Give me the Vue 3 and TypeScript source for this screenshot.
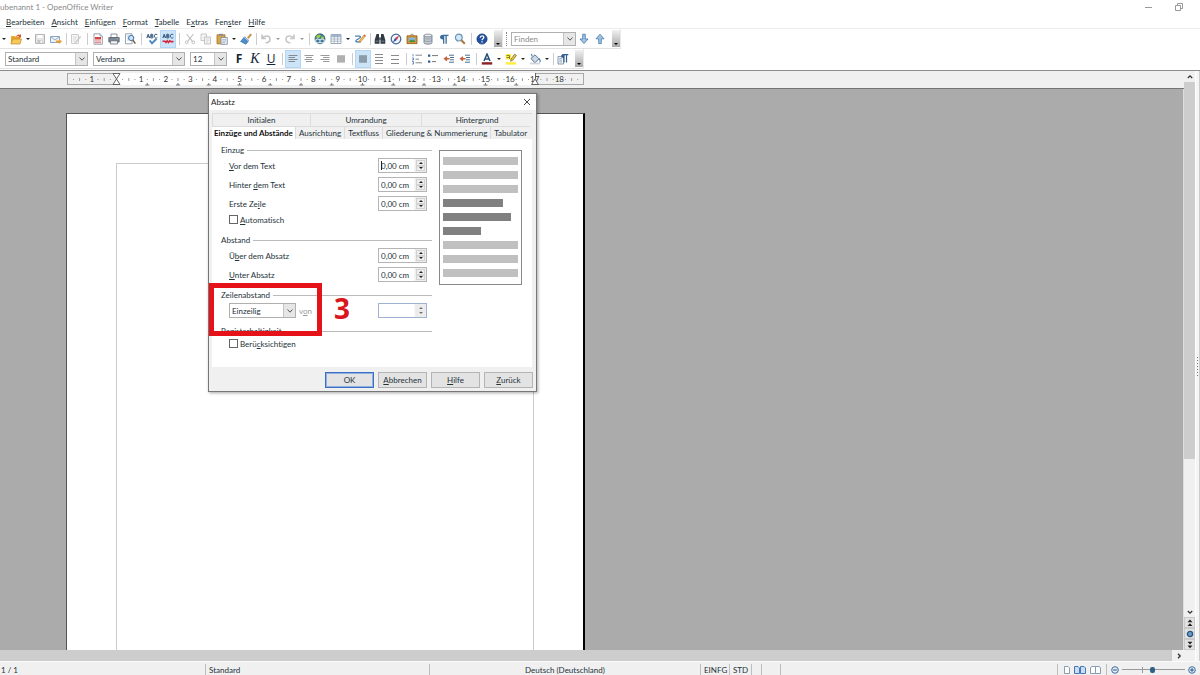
<script setup lang="ts">
import { h, ref } from 'vue'

type Shape = [d: string, fill: string, stroke?: string, width?: number]
interface Tool { kind: 'icon' | 'caret' | 'sep' | 'thin'; icon?: string; label?: string; active?: boolean; dim?: boolean }

/* Splits "Hinter _dem" around its access key and underlines the key. */
const Mnemonic = (props: { text: string }) => {
  const i = props.text.indexOf('_')
  if (i < 0) return h('span', props.text)
  return h('span', [props.text.slice(0, i), h('u', props.text[i + 1]), props.text.slice(i + 2)])
}

const icons: Record<string, Shape[]> = {
  open: [['M1 3H5L6 4H10V10H1Z', '#e9a92c'], ['M1 10L3 6H11.5L10 11H1Z', '#f7c95a', '#b97a14', 0.6], ['M6 4C7 1 9 1 10 2L11 1V4.5H7.5L9 3.4C8 2.6 7.5 3 6.8 4Z', '#d5532b']],
  save: [['M1.5 1.5H10.5V10.5H1.5Z', '#e4e4e4', '#b4b4b4', 1], ['M3.5 2H8.5V5H3.5Z', '#fff'], ['M3.5 7H8.5V10.5H3.5Z', '#c4c4c4'], ['M6.5 7.5H7.8V10H6.5Z', '#fff']],
  mail: [['M.5 3.5H9.5V9.5H.5Z', '#edf2f8', '#7f9cba', 0.9], ['M1 4L5 7L9 4', 'none', '#7f9cba', 0.8], ['M6 7.5H9V6L12 8.5L9 11V9.5H6Z', '#e9a02c']],
  edit: [['M1.5 1.5H8.5V10.5H1.5Z', '#f6f6f6', '#c8c8c8', 0.9], ['M3 4H7M3 6H6M3 8H5', 'none', '#d0d0d0', 0.8], ['M5 9L10 3L11.2 4L6.2 9.7L4.6 10Z', '#c9c9c9']],
  pdf: [['M2 .8H8L10.3 3V11.2H2Z', '#fff', '#8a93a0', 0.9], ['M8 .8V3H10.3', '#dde4ec', '#8a93a0', 0.7], ['M3 4H9V6.5H3Z', '#d84343'], ['M3 8H9M3 9.7H9', 'none', '#d86a6a', 0.9]],
  print: [['M3 1H9V5H3Z', '#fff', '#6f7883', 0.8], ['M.8 4.5H11.2V9H.8Z', '#7b8794', '#4d5863', 0.7], ['M2.5 7.8H9.5V11H2.5Z', '#f2f5f8', '#59636e', 0.7], ['M8.8 5.5H10V6.3H8.8Z', '#8de08a']],
  preview: [['M1.5 .8H8V10.8H1.5Z', '#fff', '#7b8fa6', 0.8], ['M3 3H6.6M3 5H5M3 7H5', 'none', '#a7b7c8', 0.7], ['M4.6 5A2.6 2.6 0 1 0 9.8 5A2.6 2.6 0 1 0 4.6 5', '#cfe5f8', '#3c6fa3', 1], ['M9 7.2L11.3 10.6', 'none', '#7d5b3a', 1.5]],
  spell: [['M.8 5L2.2 1.2L3.6 5M1.3 3.8H3.1M4.8 1.2V5H6C7.6 5 7.6 3 6 3H4.8H6C7.3 3 7.3 1.2 6 1.2H4.8M11.3 1.7C9.4.3 8.3 1.8 8.4 3.2C8.5 5 10.3 5.6 11.4 4.4', 'none', '#24466f', 0.9], ['M3.6 7.4L6 10.3L10.6 5.8', 'none', '#4b8bc4', 1.9]],
  auto: [['M.8 5L2.2 1.2L3.6 5M1.3 3.8H3.1M4.8 1.2V5H6C7.6 5 7.6 3 6 3H4.8H6C7.3 3 7.3 1.2 6 1.2H4.8M11.3 1.7C9.4.3 8.3 1.8 8.4 3.2C8.5 5 10.3 5.6 11.4 4.4', 'none', '#24466f', 0.9], ['M.5 8.2H3L4 9.4L5.2 7.8L6.5 9.4L7.8 7.8L9 8.6H11.5', 'none', '#d3273c', 1.6]],
  cut: [['M2.5 1L8.6 8.6M9.5 1L3.4 8.6', 'none', '#c0c0c0', 1.1], ['M1.3 9.3A1.4 1.4 0 1 0 4.1 9.3A1.4 1.4 0 1 0 1.3 9.3M7.9 9.3A1.4 1.4 0 1 0 10.7 9.3A1.4 1.4 0 1 0 7.9 9.3', 'none', '#c0c0c0', 1]],
  copy: [['M1 1H6.5V7.5H1Z', '#f4f4f4', '#c3c3c3', 0.9], ['M4.5 4H10.5V11H4.5Z', '#f4f4f4', '#bdbdbd', 0.9], ['M6 6H9M6 7.6H9M6 9.2H8', 'none', '#cfcfcf', 0.7]],
  paste: [['M1 1.8H9V10.8H1Z', '#dca648', '#9d6f20', 0.8], ['M3 .8H7V3H3Z', '#8b8f95'], ['M5 4.5H11.3V11.3H5Z', '#eef3f8', '#7688a0', 0.8], ['M6.2 6.6H10M6.2 8.1H10M6.2 9.6H9', 'none', '#8fa3b9', 0.7]],
  brush: [['M7.5 4.5L10.5 .8L11.6 1.8L8.6 5.5Z', '#d59b3b', '#99651b', 0.4], ['M4.7 3.6L9 7.6L7.9 8.7L3.6 4.9Z', '#a9c4de', '#5c7898', 0.5], ['M3.5 5L7.8 8.8L5.8 11.2L.6 8.4Z', '#4a8fd0', '#2b5f98', 0.6]],
  undo: [['M2 1.5V5.5H6M2.3 5.2C4 2.4 9.8 2 10 6C10 8.5 7.8 9.8 5.5 9.8', 'none', '#c3c3c3', 1.6]],
  redo: [['M10 1.5V5.5H6M9.7 5.2C8 2.4 2.2 2 2 6C2 8.5 4.2 9.8 6.5 9.8', 'none', '#c8c8c8', 1.6]],
  globe: [['M1 5.8A5 5 0 1 0 11 5.8A5 5 0 1 0 1 5.8', '#3f7d9c', '#2b5567', 0.7], ['M2 3.5L4.5 1.6L7 2.2L5.4 4.7L3 5.2ZM7.5 3L10.2 4.6L9 6.6L7 5.4Z', '#9ecb4a'], ['M1.8 8A2.2 1.5 0 1 1 6 8A2.2 1.5 0 1 1 1.8 8M6 8A2.2 1.5 0 1 1 10.2 8A2.2 1.5 0 1 1 6 8', 'none', '#d9e5ec', 1.1]],
  table: [['M1 1.5H11V10.5H1Z', '#fff', '#8194a8', 0.8], ['M1 1.5H11V3.6H1Z', '#9fb9d4'], ['M1 3.8H11M1 6H11M1 8.2H11M4.3 1.5V10.5M7.6 1.5V10.5', 'none', '#8ea2b6', 0.7]],
  draw: [['M1 3.2H5.5C7 3.2 6.5 5 5 5.5L2.5 7C1 8.5 2.5 9.2 4.5 8.9H7', 'none', '#4a80bd', 1.3], ['M5.4 7.6L9.8 2.2L11.3 3.3L7 8.6L5 9.4Z', '#f2b84b', '#b77b20', 0.5], ['M9.6 2.5L10.4 1.4L11.9 2.6L11.1 3.6Z', '#d85050']],
  find: [['M2.5 1H5V4L5.5 5V10.8H.7V7Z', '#333a44'], ['M9.5 1H7V4L6.5 5V10.8H11.3V7Z', '#333a44'], ['M5 4.4H7V7H5Z', '#59626e'], ['M1.6 8.2H4.4M7.6 8.2H10.4', 'none', '#8391a2', 0.9]],
  compass: [['M1.2 6A4.8 4.8 0 1 0 10.8 6A4.8 4.8 0 1 0 1.2 6', '#f0f5fc', '#4d689c', 1.3], ['M9.2 2.4L6.9 7L5 5Z', '#d53b3b'], ['M2.8 9.4L5 5L6.9 7Z', '#2d519b']],
  gallery: [['M1 2.8H11V10.6H1Z', '#d69432', '#8d5b17', 0.8], ['M2.8 4.5H9.2V8.9H2.8Z', '#7fb8e3'], ['M2.8 8.9L5 6.4L6.5 7.6L8 6.6L9.2 8.9Z', '#4d8b3b'], ['M4 2.6L6 .9L8 2.6', 'none', '#8d5b17', 0.7]],
  db: [['M2 2.5V9.8C2 11.6 10 11.6 10 9.8V2.5Z', '#c5ccd4', '#6b7785', 0.8], ['M2 2.5C2 .7 10 .7 10 2.5C10 4.3 2 4.3 2 2.5Z', '#eef1f4', '#6b7785', 0.8], ['M2 5C3 6.4 9 6.4 10 5M2 7.4C3 8.8 9 8.8 10 7.4', 'none', '#7f8b98', 0.7]],
  pilcrow: [['M10.5 1.8H5C1 1.8 1 6.6 5 6.6V10.8H6.3V3H7.5V10.8H8.8V3H10.5Z', '#3a6d9e']],
  zoom: [['M1.4 4.6A3.4 3.4 0 1 0 8.2 4.6A3.4 3.4 0 1 0 1.4 4.6', '#d3e8f8', '#6b93b8', 1.2], ['M7.4 7.2L10.8 10.8', 'none', '#a9783f', 2]],
  help: [['M.9 6A5.1 5.1 0 1 0 11.1 6A5.1 5.1 0 1 0 .9 6', '#214f9e', '#153872', 0.7], ['M4.2 4.7C4.2 2.2 8 2.3 7.8 4.5C7.7 5.8 6 5.8 6 7.2M6 8.2V9.4', 'none', '#fff', 1.3]],
  down: [['M4.7 1.2H7.3V6H10L6 10.6L2 6H4.7Z', '#9fc3e4', '#4677a6', 0.8]],
  up: [['M4.7 10.6H7.3V5.8H10L6 1.2L2 5.8H4.7Z', '#9fc3e4', '#4677a6', 0.8]],
  left: [['M1.5 2.5H10.5M1.5 4.5H8M1.5 6.5H10.5M1.5 8.5H8', 'none', '#858b91', 1]],
  center: [['M1.5 2.5H10.5M3 4.5H9M1.5 6.5H10.5M3 8.5H9', 'none', '#9a9a9a', 1]],
  right: [['M1.5 2.5H10.5M4 4.5H10.5M1.5 6.5H10.5M4 8.5H10.5', 'none', '#9a9a9a', 1]],
  justify: [['M2 2.5H10V9H2Z', '#c4c4c4'], ['M2 3H10M2 5H10M2 7H10M2 9H10', 'none', '#9c9c9c', 1]],
  single: [['M2 2.5H10V9.5H2Z', '#9caab8'], ['M2 3H10M2 5H10M2 7H10M2 9H10', 'none', '#7f8d9b', 1]],
  onehalf: [['M2 1.5H10M2 4.5H10M2 7.5H10M2 10.5H10', 'none', '#8a8a8a', 1]],
  double: [['M2 2.5H10M2 6.5H10M2 10.5H10', 'none', '#8a8a8a', 1]],
  numbers: [['M2 1V3.5M1 5H2.5V7H1M1 8.5H2.5V11H1', 'none', '#4676a8', 0.8], ['M4.5 2.2H11M4.5 6.2H8M4.5 9.8H11', 'none', '#888', 1]],
  bullets: [['M1 1.5H3.3V3.8H1ZM1 7.5H3.3V9.8H1Z', '#345f8f'], ['M5 2.6H11M5 8.6H9', 'none', '#777', 1]],
  outdent: [['M6 2.2H11M7 4.5H11M7 6.8H11M6 9.2H11', 'none', '#4e7296', 1], ['M6.5 5.7H2.5M4 3.8L1.6 5.7L4 7.6', 'none', '#c4603c', 1.4]],
  indent: [['M6 2.2H11M7 4.5H11M7 6.8H11M6 9.2H11', 'none', '#4e7296', 1], ['M6.5 5.7H2.5M4 3.8L1.6 5.7L4 7.6', 'none', '#c4603c', 1.4]],
  color: [['M3 8L6 1L9 8M4.1 6H7.9', 'none', '#264f7d', 1.5], ['M.8 9.2H11.2V11.6H.8Z', '#8c1f24']],
  marker: [['M.8 9.2H11.2V11.6H.8Z', '#ffee3b'], ['M.8 1H6V6.5H.8Z', '#ffee3b'], ['M1.5 2.5H4.5V6M1.5 4.5H4.5', 'none', '#8a7424', 0.9], ['M6 6.2L9.6 1.2L11.4 2.4L7.8 7.2L5.6 8.2Z', '#eecb3a', '#6d5a22', 0.7]],
  bucket: [['M2 5.5L6 1.8L10 5.8L5.8 9.8Z', '#cfd9e3', '#496785', 0.9], ['M3.2 3.4L2.4 1M9.8 5.5C11.4 7 11.6 8.5 10.6 9.4', 'none', '#3f78b3', 1.1], ['M1 9.6H11V11.4H1Z', '#cfd5db']],
  para: [['M1 3.5H6.5V11H1Z', '#eef3f8', '#71869e', 0.8], ['M2.2 5.5H5M2.2 7.2H5M2.2 8.9H5', 'none', '#8397ab', 0.7], ['M11.3 1H6.4C3.4 1 3.4 5 6.4 5V9.5H7.6V2.2H8.9V9.5H10.1V2.2H11.3Z', '#315f8e']],
}

const t = (icon: string, label: string, extra: Partial<Tool> = {}): Tool => ({ kind: 'icon', icon, label, ...extra })
const caret: Tool = { kind: 'caret' }
const sep: Tool = { kind: 'sep' }
const thin: Tool = { kind: 'thin' }
const dimCaret: Tool = { kind: 'caret', dim: true }

const standardBar: Tool[] = [
  caret, t('open', 'Öffnen'), caret, t('save', 'Speichern'), t('mail', 'E-Mail'), thin, t('edit', 'Bearbeiten'), sep,
  t('pdf', 'PDF'), t('print', 'Drucken'), t('preview', 'Seitenansicht'), sep, t('spell', 'Rechtschreibung'),
  t('auto', 'AutoRechtschreibprüfung', { active: true }), sep, t('cut', 'Ausschneiden'), t('copy', 'Kopieren'),
  t('paste', 'Einfügen'), caret, t('brush', 'Format übertragen'), thin, t('undo', 'Rückgängig'), dimCaret,
  t('redo', 'Wiederherstellen'), dimCaret, sep, t('globe', 'Hyperlink'), t('table', 'Tabelle'), caret,
  t('draw', 'Zeichnen'), thin, t('find', 'Suchen'), t('compass', 'Navigator'), t('gallery', 'Gallery'),
  t('db', 'Datenquellen'), t('pilcrow', 'Steuerzeichen'), t('zoom', 'Maßstab'), sep, t('help', 'Hilfe'),
]
const formatBar: Tool[] = [
  sep, t('left', 'Linksbündig', { active: true }), t('center', 'Zentriert'), t('right', 'Rechtsbündig'), t('justify', 'Blocksatz'), sep,
  t('single', 'Zeilenabstand 1', { active: true }), t('onehalf', 'Zeilenabstand 1,5'), t('double', 'Zeilenabstand 2'), sep,
  t('numbers', 'Nummerierung'), t('bullets', 'Aufzählung'), t('outdent', 'Einzug verkleinern'), t('indent', 'Einzug vergrößern'), sep,
  t('color', 'Zeichenfarbe'), caret, t('marker', 'Hervorheben'), caret, t('bucket', 'Hintergrund'), caret, thin, t('para', 'Absatz'),
]

const menus = ['_Bearbeiten', '_Ansicht', '_Einfügen', '_Format', '_Tabelle', 'E_xtras', 'Fen_ster', '_Hilfe']
const topTabs = ['Initialen', 'Umrandung', 'Hintergrund']
const tabs = ['Einzüge und Abstände', 'Ausrichtung', 'Textfluss', 'Gliederung & Nummerierung', 'Tabulator']
const indents = [
  { id: 'before', label: '_Vor dem Text', focus: true },
  { id: 'after', label: 'Hinter _dem Text', focus: false },
  { id: 'first', label: 'Erste Ze_ile', focus: false },
]
const spacings = [
  { id: 'above', label: 'Ü_ber dem Absatz' },
  { id: 'below', label: '_Unter Absatz' },
]
const values = ref<Record<string, string>>({ before: '0,00 cm', after: '0,00 cm', first: '0,00 cm', above: '0,00 cm', below: '0,00 cm' })
const automatic = ref(false)
const register = ref(false)
const dialogButtons = ['_Abbrechen', '_Hilfe', '_Zurück']

/* Ruler geometry: one centimetre and the x of its zero mark. */
const cm = 24.6
const zero = 49.5
const numbers = [-1, ...Array.from({ length: 18 }, (_, i) => i + 1)]
const ticks = Array.from({ length: 83 }, (_, i) => i - 7).filter((i) => i % 4 !== 0)
const tabStops = Array.from({ length: 13 }, (_, i) => zero + (i + 1) * cm * 1.25)
</script>

<template>
  <div class="app">
    <header class="titlebar">
      <span class="title">ubenannt 1 - OpenOffice Writer</span>
      <div class="window-buttons">
        <button type="button" aria-label="Minimieren"><svg viewBox="0 0 8 8"><path d="M0 4.5H7" /></svg></button>
        <button type="button" aria-label="Verkleinern"><svg viewBox="0 0 8 8"><path d="M.5 2.5H5.5V7.5H.5ZM2.5 2.5V.5H7.5V5.5H5.5" /></svg></button>
      </div>
    </header>
    <nav class="menubar">
      <button v-for="m in menus" :key="m" type="button"><Mnemonic :text="m" /></button>
    </nav>

    <div class="toolbar">
      <div class="bar standard">
        <template v-for="(tool, i) in standardBar" :key="i">
          <button v-if="tool.kind === 'icon'" type="button" class="tool" :class="{ active: tool.active }" :aria-label="tool.label">
            <svg viewBox="0 0 12 12"><path v-for="(s, j) in icons[tool.icon!]" :key="j" :d="s[0]" :fill="s[1]" :stroke="s[2] ?? 'none'" :stroke-width="s[3] ?? 0" /></svg>
          </button>
          <span v-else :class="[tool.kind, { dim: tool.dim }]"></span>
        </template>
        <button type="button" class="overflow" aria-label="Weitere Symbole"></button>
      </div>
      <div class="bar search">
        <span class="grip"></span>
        <div class="combo find">
          <input type="text" placeholder="Finden" aria-label="Finden" />
          <span class="arrow"><svg viewBox="0 0 8 8"><path d="M1.5 2.5L4 5.2L6.5 2.5" /></svg></span>
        </div>
        <button v-for="d in ['down', 'up']" :key="d" type="button" class="tool" :aria-label="d === 'down' ? 'Weitersuchen' : 'Rückwärts suchen'">
          <svg viewBox="0 0 12 12"><path v-for="(s, j) in icons[d]" :key="j" :d="s[0]" :fill="s[1]" :stroke="s[2]" :stroke-width="s[3]" /></svg>
        </button>
        <button type="button" class="overflow" aria-label="Weitere Suchsymbole"></button>
      </div>
    </div>

    <div class="toolbar">
      <div class="bar format">
        <div class="combo style-box"><select aria-label="Vorlage"><option>Standard</option></select><span class="arrow"><svg viewBox="0 0 8 8"><path d="M1.5 2.5L4 5.2L6.5 2.5" /></svg></span></div>
        <div class="combo font-box"><select aria-label="Schriftart"><option>Verdana</option></select><span class="arrow"><svg viewBox="0 0 8 8"><path d="M1.5 2.5L4 5.2L6.5 2.5" /></svg></span></div>
        <div class="combo size-box"><select aria-label="Schriftgröße"><option>12</option></select><span class="arrow"><svg viewBox="0 0 8 8"><path d="M1.5 2.5L4 5.2L6.5 2.5" /></svg></span></div>
        <button type="button" class="tool letter bold">F</button>
        <button type="button" class="tool letter italic">K</button>
        <button type="button" class="tool letter under">U</button>
        <template v-for="(tool, i) in formatBar" :key="i">
          <button v-if="tool.kind === 'icon'" type="button" class="tool" :class="{ active: tool.active }" :aria-label="tool.label">
            <svg viewBox="0 0 12 12"><path v-for="(s, j) in icons[tool.icon!]" :key="j" :d="s[0]" :fill="s[1]" :stroke="s[2] ?? 'none'" :stroke-width="s[3] ?? 0" /></svg>
          </button>
          <span v-else :class="tool.kind"></span>
        </template>
        <button type="button" class="overflow" aria-label="Weitere Formatsymbole"></button>
      </div>
    </div>

    <div class="work">
      <div class="main">
        <div class="view">
          <div class="editor">
            <div class="ruler">
              <svg class="scale" viewBox="0 0 520 17">
                <rect x=".5" y="2.5" width="516" height="11" fill="#f0f0f0" stroke="#a8a8a8" />
                <rect x="49" y="2" width="419" height="12" fill="#fff" />
                <g fill="#999">
                  <rect v-for="k in ticks" :key="k" :x="zero + (k * cm) / 4 - 0.5" :y="k % 2 === 0 ? 7 : 8" width="1" :height="k % 2 === 0 ? 3 : 1" />
                </g>
                <text v-for="n in numbers" :key="n" :x="zero + n * cm" y="11">{{ Math.abs(n) }}</text>
                <path v-for="x in tabStops" :key="x" :d="`M${x - 2} 14H${x + 2}M${x} 12V14`" stroke="#777" stroke-width="1" />
                <path d="M46 2.5H53L49.5 8ZM46 13.5H53L49.5 8Z" fill="#fff" stroke="#555" stroke-width=".9" />
                <path d="M464.5 13.5H471.5L468 8ZM468.5 2V8" fill="#fff" stroke="#555" stroke-width=".9" />
              </svg>
            </div>
            <main class="canvas">
              <div class="paper"><div class="text-area"></div></div>
            </main>
          </div>
          <div class="vscroll">
            <button type="button" aria-label="Nach oben"><svg viewBox="0 0 8 8"><path d="M1.8 5L4 2.8L6.2 5" /></svg></button>
            <div class="track"><div class="thumb"></div></div>
            <button type="button" aria-label="Nach unten"><svg viewBox="0 0 8 8"><path d="M1.8 3L4 5.2L6.2 3" /></svg></button>
            <button type="button" class="raised" aria-label="Vorherige Seite"><svg viewBox="0 0 8 8"><path class="solid" d="M4 .5L6.5 3.3H1.5ZM4 4.2L6.5 7H1.5Z" /></svg></button>
            <button type="button" class="raised" aria-label="Navigation"><svg viewBox="0 0 8 8"><circle cx="4" cy="4" r="2.6" fill="#6c9cc8" stroke="#2c5680" /></svg></button>
            <button type="button" class="raised" aria-label="Nächste Seite"><svg viewBox="0 0 8 8"><path class="solid" d="M4 3.5L6.5 .7H1.5ZM4 7.2L6.5 4.4H1.5Z" /></svg></button>
          </div>
        </div>
        <div class="hscroll">
          <div class="hthumb"></div>
          <button type="button" aria-label="Nach rechts"><svg viewBox="0 0 8 8"><path d="M3 1.8L5.2 4L3 6.2" /></svg></button>
        </div>
      </div>
      <div class="splitter"><i v-for="n in 7" :key="n"></i></div>
    </div>

    <footer class="statusbar">
      <span class="cell page-no">1 / 1</span>
      <span class="cell template">Standard</span>
      <span class="cell language">Deutsch (Deutschland)</span>
      <span class="cell mode">EINFG</span>
      <span class="cell">STD</span>
      <span class="cell blank"></span>
      <span class="cell blank wide"></span>
      <span class="cell rest"></span>
      <div class="cell layouts">
        <svg viewBox="0 0 40 8">
          <path d="M2.5 .5H6L7.5 2V7.5H2.5Z" fill="#fff" stroke="#8b9db0" />
          <path d="M12.5 .5H16L17.5 2V7.5H12.5ZM18.5 .5H22L23.5 2V7.5H18.5Z" fill="#c9def5" stroke="#4a76b0" />
          <path d="M28.5 1.5L30 .5H33.5V7.5H28.5ZM33.5 .5H37L38.5 1.5V7.5H33.5Z" fill="#fff" stroke="#8b9db0" />
        </svg>
      </div>
      <div class="cell zoomer">
        <button type="button" aria-label="Verkleinern"><svg viewBox="0 0 8 8"><circle cx="4" cy="4" r="3.3" fill="#e3eef9" stroke="#3d6c9e" /><path d="M2.2 4H5.8" stroke="#1f4d80" /></svg></button>
        <input type="range" min="0" max="100" value="49" aria-label="Maßstab" />
        <button type="button" aria-label="Vergrößern"><svg viewBox="0 0 8 8"><circle cx="4" cy="4" r="3.3" fill="#e3eef9" stroke="#3d6c9e" /><path d="M2.2 4H5.8M4 2.2V5.8" stroke="#1f4d80" /></svg></button>
      </div>
    </footer>

    <section class="dialog" role="dialog" aria-label="Absatz">
      <header class="dialog-title">
        <span>Absatz</span>
        <button type="button" aria-label="Schließen"><svg viewBox="0 0 8 8"><path d="M1 1L7 7M7 1L1 7" /></svg></button>
      </header>
      <div class="tab-rows" role="tablist">
        <div class="tabs top"><button v-for="tab in topTabs" :key="tab" type="button" role="tab">{{ tab }}</button></div>
        <div class="tabs"><button v-for="(tab, i) in tabs" :key="tab" type="button" role="tab" :class="{ selected: i === 0 }" :aria-selected="i === 0">{{ tab }}</button></div>
      </div>
      <div class="panel">
        <form class="fields" @submit.prevent>
          <fieldset>
            <legend>Einzug</legend>
            <div v-for="f in indents" :key="f.id" class="row">
              <label :for="f.id"><Mnemonic :text="f.label" /></label>
              <span class="spin" :class="{ focus: f.focus }"><input :id="f.id" v-model="values[f.id]" type="text" /><span class="steps"><button type="button" aria-label="Mehr"></button><button type="button" class="less" aria-label="Weniger"></button></span></span>
            </div>
            <label class="check"><input v-model="automatic" type="checkbox" /><Mnemonic text="_Automatisch" /></label>
          </fieldset>
          <fieldset>
            <legend>Abstand</legend>
            <div v-for="f in spacings" :key="f.id" class="row">
              <label :for="f.id"><Mnemonic :text="f.label" /></label>
              <span class="spin"><input :id="f.id" v-model="values[f.id]" type="text" /><span class="steps"><button type="button" aria-label="Mehr"></button><button type="button" class="less" aria-label="Weniger"></button></span></span>
            </div>
          </fieldset>
          <fieldset>
            <legend>Zeilenabstand</legend>
            <div class="row">
              <div class="combo line-box"><select aria-label="Zeilenabstand"><option>Einzeilig</option></select><span class="arrow"><svg viewBox="0 0 8 8"><path d="M1.5 2.5L4 5.2L6.5 2.5" /></svg></span></div>
              <label for="of" class="off"><Mnemonic text="v_on" /></label>
              <span class="spin disabled"><input id="of" type="text" disabled /><span class="steps"><button type="button" disabled aria-label="Mehr"></button><button type="button" class="less" disabled aria-label="Weniger"></button></span></span>
            </div>
          </fieldset>
          <fieldset>
            <legend>Registerhaltigkeit</legend>
            <label class="check"><input v-model="register" type="checkbox" /><Mnemonic text="Berü_cksichtigen" /></label>
          </fieldset>
        </form>
        <div class="preview">
          <i v-for="n in 3" :key="n"></i>
          <i class="dark w80"></i><i class="dark w90"></i><i class="dark w50"></i>
          <i v-for="n in 3" :key="n + 3"></i>
        </div>
      </div>
      <footer class="dialog-actions">
        <button type="button" class="default">OK</button>
        <button v-for="b in dialogButtons" :key="b" type="button"><Mnemonic :text="b" /></button>
      </footer>
      <div class="highlight"></div>
      <strong class="step-no">3</strong>
    </section>
  </div>
</template>

<style>
body { margin: 0; overflow: hidden; }
</style>

<style scoped>
.app { display: flex; flex-direction: column; height: 100vh; position: relative; overflow: hidden; background: #fff; color: #24323a; font: 8px/10px Lato, "Open Sans", sans-serif; font-variant-ligatures: none; }
.app * { box-sizing: border-box; }
button, input, select { font: inherit; font-variant-ligatures: none; color: inherit; margin: 0; padding: 0; border: 0; background: none; border-radius: 0; outline: 0; }
svg { display: block; }

.titlebar { display: flex; justify-content: space-between; align-items: center; flex: none; height: 14px; color: #8a8a8a; }
.window-buttons { display: flex; gap: 22px; padding-right: 17px; }
.window-buttons svg { width: 8px; height: 8px; fill: none; stroke: #999; }
.menubar { display: flex; align-items: center; gap: 7px; flex: none; height: 15px; padding: 2px 0 0 6px; border-bottom: 1px solid #ececec; }
.menubar button { white-space: nowrap; }

.toolbar { display: flex; flex: none; height: 20px; }
.bar { display: flex; align-items: center; border-bottom: 1px solid #e2e2e2; border-right: 1px solid #e8e8e8; }
.tool { width: 16px; height: 18px; flex: none; display: flex; align-items: center; justify-content: center; }
.tool svg { width: 12px; height: 12px; }
.tool.active { background: #cce4f8; box-shadow: inset 0 0 0 1px #b3d7f5; }
.letter { font: 12px/16px "Open Sans", sans-serif; color: #152535; }
.bold { font-weight: 700; }
.italic { font-style: italic; font-family: "Liberation Serif", serif; font-size: 14px; }
.under { text-decoration: underline; }
.caret { width: 8px; flex: none; display: flex; justify-content: center; }
.caret::before { content: ""; border: 2px solid transparent; border-top-color: #222; border-bottom: 0; }
.caret.dim::before { border-top-color: #999; }
.sep, .thin { width: 6px; height: 12px; flex: none; background: linear-gradient(#ccc, #ccc) center / 1px 100% no-repeat; }
.thin { width: 4px; }
.overflow { width: 8px; height: 17px; margin-left: 4px; background: linear-gradient(#f0f0f0, #a8a8a8); display: flex; align-items: flex-end; justify-content: center; padding-bottom: 2px; }
.overflow::before { content: ""; border: 2px solid transparent; border-top-color: #000; border-bottom: 0; }
.grip { width: 1px; height: 14px; margin: 0 4px 0 3px; border-left: 1px dotted #888; }

.combo { display: flex; height: 14px; border: 1px solid #b0b0b0; background: #fff; flex: none; }
.combo select, .combo input { flex: 1; min-width: 0; width: 0; appearance: none; padding-left: 2px; }
.arrow { width: 12px; flex: none; background: #e6e6e6; border-left: 1px solid #c4c4c4; display: flex; align-items: center; justify-content: center; pointer-events: none; }
.arrow svg { width: 8px; height: 8px; fill: none; stroke: #555; }
.find { width: 65px; }
.find input::placeholder { color: #8b8b8b; opacity: 1; }
.format { padding-left: 5px; }
.style-box { width: 83px; margin-right: 5px; }
.font-box { width: 92px; margin-right: 5px; }
.size-box { width: 37px; margin-right: 4px; }

.work { display: flex; flex: 1; min-height: 0; border-top: 1px solid #8c8c8c; margin-top: 1px; }
.main { display: flex; flex-direction: column; flex: 1; min-width: 0; }
.view { display: flex; flex: 1; min-height: 0; }
.editor { display: flex; flex-direction: column; flex: 1; min-width: 0; }
.ruler { flex: none; height: 18px; padding-left: 67px; background: #f0f0f0; border-bottom: 1px solid #757575; }
.scale { width: 520px; height: 17px; }
.scale text { font-size: 8px; text-anchor: middle; fill: #333; }
.canvas { flex: 1; min-height: 0; overflow: hidden; background: #ababab; padding: 24px 0 0 66px; border-right: 1px solid #ddd; display: flex; }
.paper { width: 519px; background: #fff; border: 1px solid #555; border-right: 2px solid #000; border-bottom: 0; padding: 49px 49px 0; display: flex; }
.text-area { flex: 1; border: 1px solid #ccc; border-bottom: 0; }

.vscroll { width: 11px; flex: none; display: flex; flex-direction: column; background: #f0f0f0; }
.vscroll button, .hscroll button { height: 11px; width: 11px; flex: none; display: flex; align-items: center; justify-content: center; }
.vscroll svg, .hscroll svg { width: 8px; height: 8px; fill: none; stroke: #333; stroke-width: 1.3; }
.vscroll .solid { fill: #222; stroke: none; }
.vscroll .raised { background: #e2e2e2; border: 1px solid #c9c9c9; }
.track { flex: 1; }
.thumb { height: 72%; background: #cdcdcd; }
.hscroll { flex: none; height: 11px; display: flex; background: #f0f0f0; }
.hthumb { flex: 1; background: #cdcdcd; margin-right: 1px; }
.hscroll button { margin-right: 11px; }
.splitter { width: 5px; flex: none; background: #f5f5f5; border-left: 1px solid #fff; border-right: 1px solid #ccc; display: flex; flex-direction: column; align-items: center; justify-content: center; gap: 2px; }
.splitter i { width: 1px; height: 1px; background: #777; }

.statusbar { flex: none; height: 14px; display: flex; align-items: center; padding-top: 2px; background: #f0f0f0; border-top: 1px solid #fafafa; }
.cell { height: 11px; padding: 0 3px; border-left: 1px solid #bdbdbd; white-space: nowrap; display: flex; align-items: center; flex: none; }
.page-no { width: 205px; border: 0; padding: 0 1px; }
.template { width: 224px; }
.language { width: 271px; justify-content: center; }
.mode { width: 29px; }
.blank { width: 10px; }
.blank.wide { width: 19px; }
.rest { flex: 1; }
.layouts svg { width: 40px; height: 8px; }
.layouts, .zoomer { padding: 0 4px; }
.zoomer { gap: 3px; width: 94px; }
.zoomer svg { width: 8px; height: 8px; fill: none; }
.zoomer input { flex: 1; min-width: 0; height: 8px; appearance: none; background: linear-gradient(#999, #999) center / 100% 1px no-repeat, linear-gradient(#999, #999) 33% 50% / 1px 6px no-repeat; }
.zoomer input::-webkit-slider-thumb { appearance: none; width: 5px; height: 6px; border-radius: 2px; background: #2f6187; }

.dialog { position: absolute; left: 208px; top: 93px; width: 329px; background: #f0f0f0; border: 1px solid #777; box-shadow: 1px 1px 3px rgba(0, 0, 0, .35); }
.dialog-title { display: flex; justify-content: space-between; align-items: center; height: 16px; padding: 0 5px 0 2px; background: #fff; color: #222; }
.dialog-title svg { width: 8px; height: 8px; fill: none; stroke: #333; stroke-width: .9; }
.tab-rows { padding: 3px 4px 0 3px; }
.tabs { display: flex; height: 13px; overflow: hidden; }
.tabs button { border: 1px solid #dcdcdc; border-width: 1px 1px 0 0; white-space: nowrap; padding: 0 3px; flex: none; }
.tabs.top button { flex: 8 1 0; }
.tabs.top button:first-child { flex-grow: 7; border-left-width: 1px; }
.tabs .selected { background: #fff; font-weight: 700; padding: 0 2px; color: #111; }
.tabs button:last-child { border-right: 0; }
.panel { display: flex; align-items: flex-start; gap: 7px; margin: 0 4px 0 3px; padding: 6px 10px 14px 9px; background: #fff; }
.fields { flex: none; width: 211px; display: flex; flex-direction: column; gap: 6px; }
fieldset { border: 0; margin: 0; padding: 0; min-width: 0; }
legend { display: flex; align-items: center; gap: 3px; width: 100%; height: 10px; padding: 0; margin-bottom: 1px; }
legend::after { content: ""; flex: 1; height: 1px; background: #bbb; }
.row { display: flex; align-items: center; height: 19px; padding: 0 5px 0 8px; }
.spin { margin-left: auto; width: 49px; height: 15px; display: flex; border: 1px solid #b5b5b5; background: #fff; position: relative; }
.spin input { flex: 1; width: 0; min-width: 0; padding-left: 2px; }
.spin.focus::before { content: ""; position: absolute; left: 2px; top: 2px; width: 1px; height: 9px; background: #222; }
.spin.disabled { border-color: #9fb2d2; }
.steps { width: 12px; background: #eee; display: flex; flex-direction: column; border-left: 1px solid #f7f7f7; padding: 1px; }
.steps button { flex: 1; display: flex; align-items: center; justify-content: center; border: 1px solid #d2d2d2; }
.steps button::before { content: ""; border: 2px solid transparent; border-top: 0; border-bottom-color: #222; }
.steps .less::before { border-top: 2px solid #222; border-bottom: 0; }
.disabled .steps button { border-color: #e8e8e8; opacity: .6; }
.check { display: flex; align-items: center; gap: 2px; height: 13px; margin-bottom: 3px; padding-left: 8px; }
.check input { appearance: none; width: 9px; height: 9px; border: 1px solid #666; background: #fff; }
.line-box { width: 67px; margin-right: 3px; height: 15px; }
.off { color: #9a9a9a; }
.preview { flex: 1; height: 135px; margin-top: 5px; border: 1px solid #888; padding: 6px 3px 0 3px; display: flex; flex-direction: column; gap: 6px; }
.preview i { height: 8px; background: #c0c0c0; flex: none; }
.preview .dark { background: #808080; }
.w80 { width: 80%; }
.w90 { width: 90%; }
.w50 { width: 50%; }
.dialog-actions { display: flex; justify-content: flex-end; gap: 4px; padding: 5px 3px 3px; }
.dialog-actions button { width: 49px; height: 16px; background: #e3e3e3; border: 1px solid #b4b4b4; }
.dialog-actions .default { border: 1px solid #3a6fc4; box-shadow: inset 0 0 0 1px #8fb0e0; }
.highlight { position: absolute; left: 0; top: 189px; width: 113px; height: 53px; border: 5px solid #e5121a; pointer-events: none; }
.step-no { position: absolute; left: 125px; top: 197px; font: 700 28px/34px "Open Sans", sans-serif; color: #d9161c; }
</style>
